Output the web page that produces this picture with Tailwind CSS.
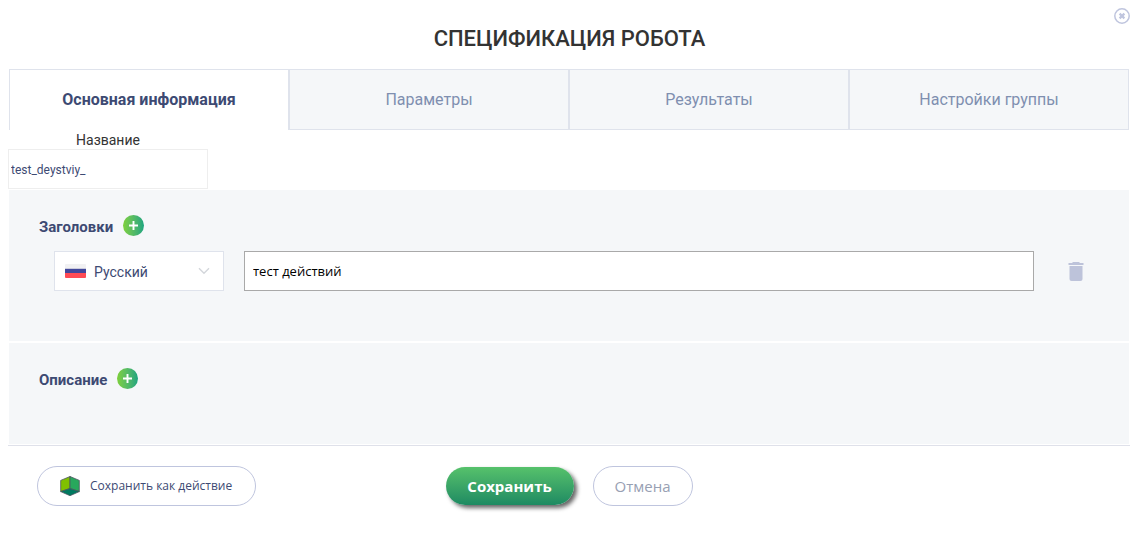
<!DOCTYPE html>
<html lang="ru">
<head>
<meta charset="utf-8">
<meta name="viewport" content="width=device-width, initial-scale=1">
<title>Спецификация робота</title>
<script src="https://cdn.jsdelivr.net/npm/@tailwindcss/browser@4"></script>
</head>
<body class="bg-white font-[Roboto,sans-serif] text-[#3d4a73]">
<main class="relative pb-7">
  <button type="button" aria-label="Закрыть" class="absolute top-2 right-[5px] size-4">
    <svg viewBox="0 0 16 16" class="size-4" fill="none" stroke="#bfc5de"><circle cx="8" cy="8" r="7.2" stroke-width="1.5"/><path d="M5.6 5.6l4.8 4.8M10.4 5.6l-4.8 4.8" stroke-width="2.2"/></svg>
  </button>
  <h1 class="pt-6 pl-1 text-center text-[22px] leading-[30px] font-medium text-[#333]">СПЕЦИФИКАЦИЯ РОБОТА</h1>

  <div role="tablist" class="mt-[15px] mr-[6px] ml-[9px] grid h-[61px] grid-cols-4 text-base text-[#7f8fb0]">
    <button type="button" role="tab" aria-selected="true" class="border border-b-0 border-[#dfe3ec] bg-white font-bold text-[#3d4a73]">Основная информация</button>
    <button type="button" role="tab" aria-selected="false" class="border border-[#dfe3ec] bg-[#f5f7f9]">Параметры</button>
    <button type="button" role="tab" aria-selected="false" class="border border-[#dfe3ec] bg-[#f5f7f9]">Результаты</button>
    <button type="button" role="tab" aria-selected="false" class="border border-[#dfe3ec] bg-[#f5f7f9]">Настройки группы</button>
  </div>

  <div class="ml-2 w-[200px]">
    <label for="name" class="block h-[19px] text-center text-sm leading-5 text-[#333]">Название</label>
    <input id="name" type="text" value="test_deystviy_" class="block h-10 w-full border border-[#eeeeee] bg-white px-0.5 pt-0.5 text-xs text-[#3d4a73]">
  </div>

  <section class="mt-px mr-[6px] ml-[9px] h-[151px] bg-[#f5f7f9] pt-[25px] pr-[95px] pl-[30px]">
    <div class="flex h-[21px] items-center gap-[10px]">
      <h2 class="pt-0.5 text-[15px] leading-5 font-bold">Заголовки</h2>
      <button type="button" aria-label="Добавить заголовок" class="flex size-[21px] items-center justify-center rounded-full bg-linear-to-r from-[#7ed038] to-[#1aa57e]">
        <svg viewBox="0 0 9 9" class="size-[9px]" stroke="#fff" stroke-width="1.9"><path d="M4.5 0v9M0 4.5h9"/></svg>
      </button>
    </div>
    <div class="relative mt-[15px] flex h-10 pl-[15px]">
      <div class="relative mr-5 w-[170px] shrink-0">
        <select aria-label="Язык" class="block h-10 w-full appearance-none border border-[#dfe3ec] bg-white pt-0.5 pr-8 pl-[39px] text-sm text-[#3d4a73]">
          <option>Русский</option>
        </select>
        <svg viewBox="0 0 21 14" class="pointer-events-none absolute top-[13px] left-[11px] h-[14px] w-[21px]"><rect width="21" height="14" rx="1" fill="#f1f1f3"/><rect y="4" width="21" height="1" fill="#ccccdd"/><rect y="5" width="21" height="4" fill="#41479b"/><path d="M0 9h21v4q0 1-1 1H1q-1 0-1-1z" fill="#ff4b55"/></svg>
        <svg viewBox="0 0 12 8" class="pointer-events-none absolute top-4 right-[14px] h-2 w-3" fill="none" stroke="#d3d6db" stroke-width="1.4"><path d="M1 1.2l5 5 5-5"/></svg>
      </div>
      <input type="text" aria-label="Заголовок" value="тест действий" class="h-10 min-w-0 flex-1 border border-[#a9a9a9] bg-white px-2 font-['Open_Sans',sans-serif] text-[13px] text-black">
      <button type="button" aria-label="Удалить" class="absolute top-[11px] -right-[50px]">
        <svg viewBox="0 0 16 20" class="h-5 w-4" fill="#bdc3da"><path d="M5 0h6l1 1h3.5v2H.5V1H4z"/><path d="M1.5 4h13v13q0 2-2 2h-9q-2 0-2-2z"/></svg>
      </button>
    </div>
  </section>

  <section class="mt-0.5 mr-[6px] ml-[9px] h-[101px] bg-[#f5f7f9] pt-[25px] pl-[30px]">
    <div class="flex h-[21px] items-center gap-[10px]">
      <h2 class="pt-0.5 text-[15px] leading-5 font-bold">Описание</h2>
      <button type="button" aria-label="Добавить описание" class="flex size-[21px] items-center justify-center rounded-full bg-linear-to-r from-[#7ed038] to-[#1aa57e]">
        <svg viewBox="0 0 9 9" class="size-[9px]" stroke="#fff" stroke-width="1.9"><path d="M4.5 0v9M0 4.5h9"/></svg>
      </button>
    </div>
  </section>

  <footer class="mt-px mr-[5px] ml-2 grid grid-cols-[1fr_auto_1fr] items-start border-t border-[#dfe1ea] px-[29px] pt-5 font-['Open_Sans',sans-serif]">
    <button type="button" class="flex h-10 w-[219px] items-center gap-[10px] rounded-full border border-[#bfc5de] bg-white pl-[22px] text-xs whitespace-nowrap text-[#3d4a73]">
      <svg viewBox="0 0 20 20" class="size-5 shrink-0" stroke="#4b5560" stroke-width=".8" stroke-linejoin="round"><path d="M10 .5L.7 4.4v11.2L10 12.5z" fill="#80c000"/><path d="M10 .5l9.3 3.9v11.2L10 12.5z" fill="#28a85c"/><path d="M.7 15.6L10 12.5l9.3 3.1L10 19.7z" fill="#007a60"/></svg>
      Сохранить как действие
    </button>
    <div class="flex gap-[19px]">
      <button type="submit" class="mt-px h-[38px] w-32 rounded-full bg-linear-to-b from-[#56c26b] to-[#1d8a62] text-[15px] font-bold text-white shadow-[3px_3px_4px_#666]">Сохранить</button>
      <button type="button" class="h-10 w-[100px] rounded-full border border-[#bfc5de] bg-white text-[15px] text-[#98a0b3]">Отмена</button>
    </div>
  </footer>
</main>
</body>
</html>
